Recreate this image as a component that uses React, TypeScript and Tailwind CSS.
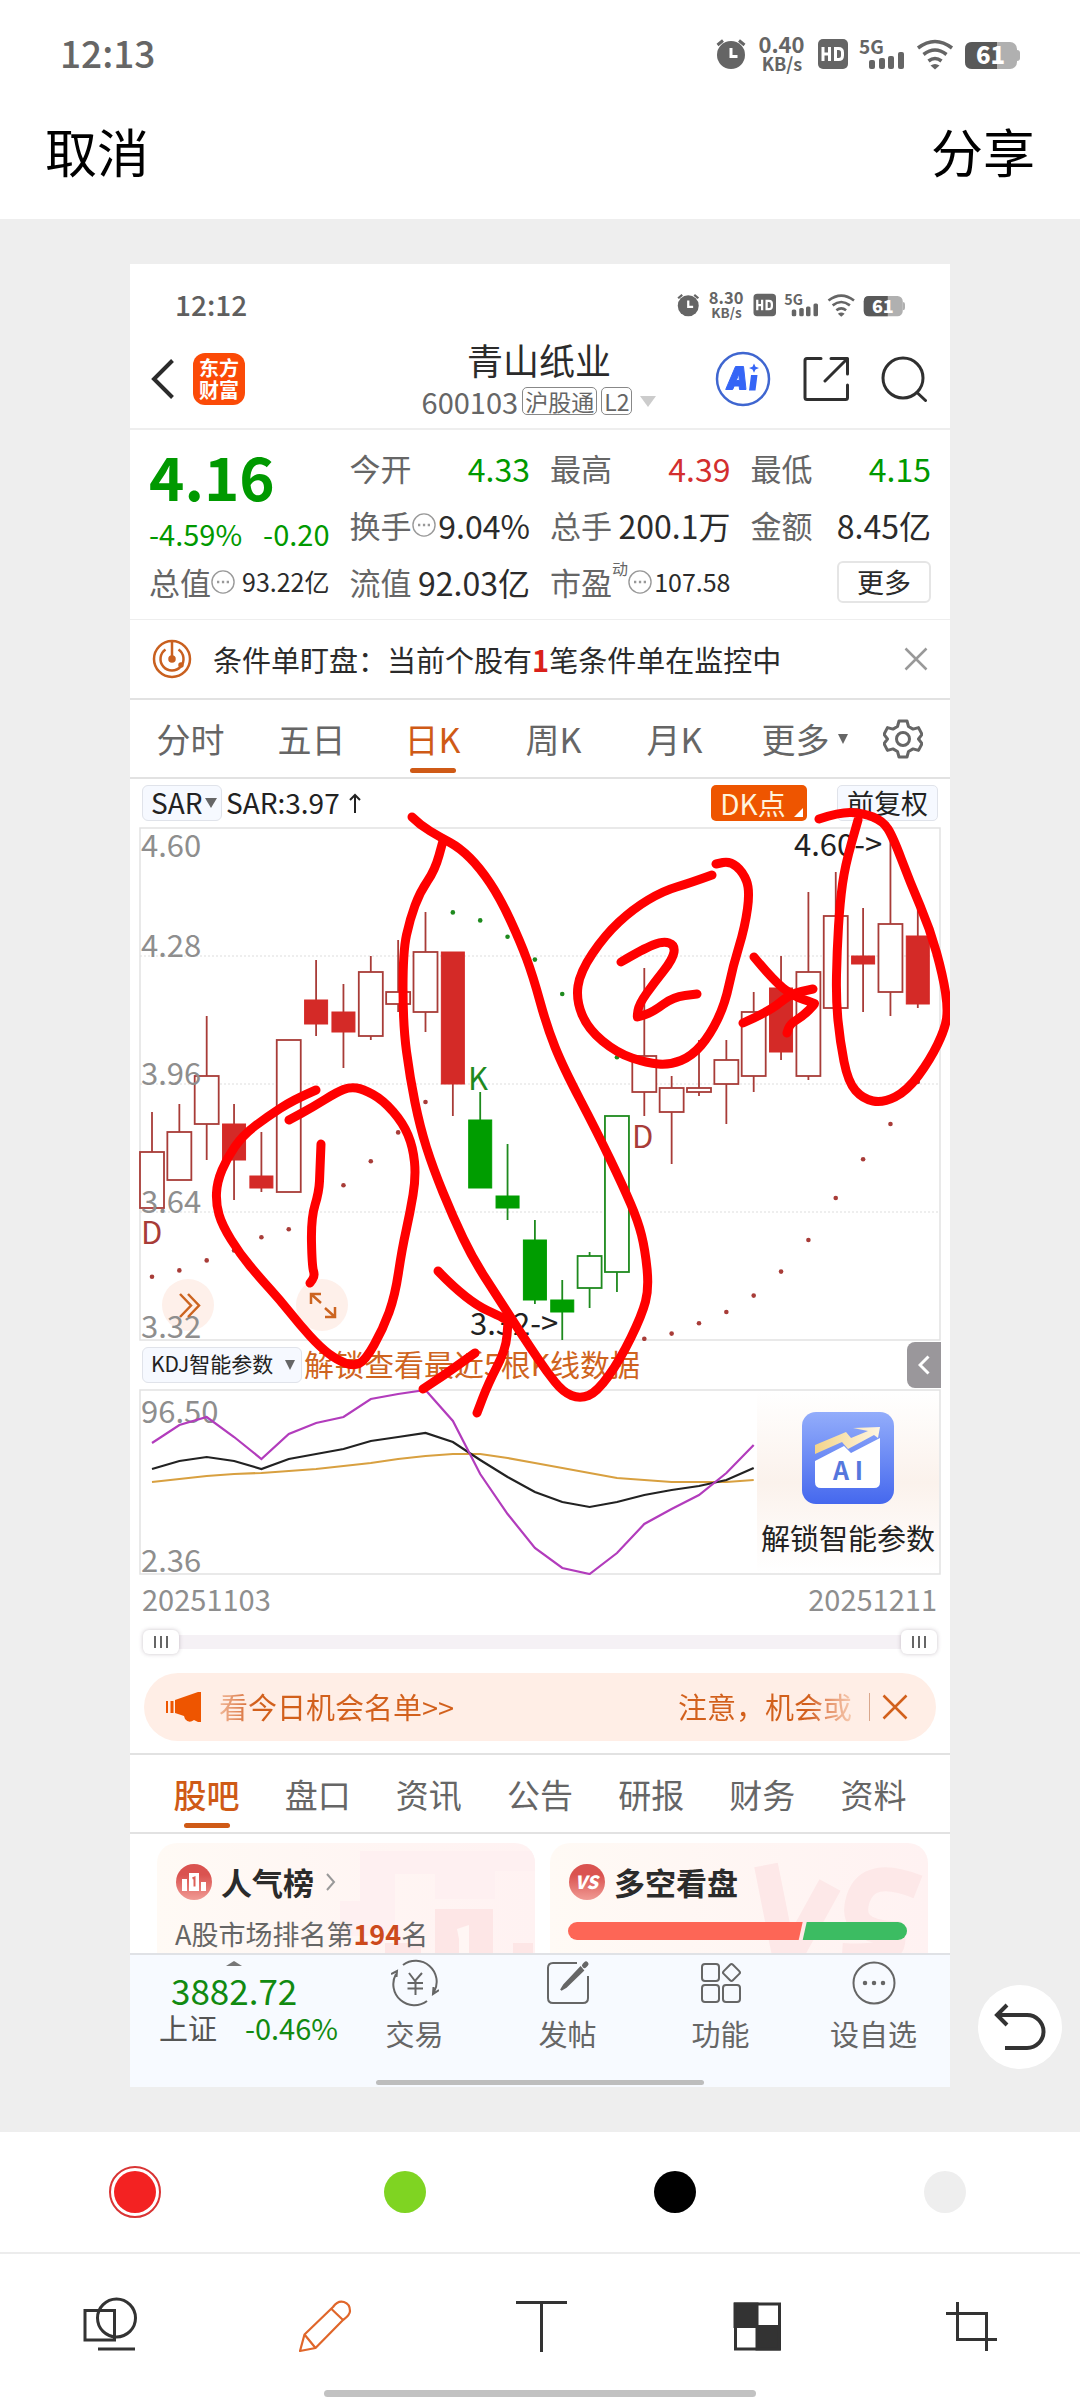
import type { ReactNode } from "react";
import * as Slider from "@radix-ui/react-slider";

const FONT = "font-['Noto_Sans_CJK_SC','Noto_Sans',sans-serif]";

type Point = [number, number];

type Candle = {
  high: number;
  top: number;
  bottom: number;
  low: number;
  color: "red" | "green";
  filled?: boolean;
};

const r = (high: number, top: number, bottom: number, low: number, filled = false): Candle => ({ high, top, bottom, low, color: "red", filled });
const g = (high: number, top: number, bottom: number, low: number, filled = false): Candle => ({ high, top, bottom, low, color: "green", filled });

const candles: Candle[] = [
  r(3.89, 3.79, 3.65, 3.65),
  r(3.91, 3.84, 3.72, 3.72),
  r(4.13, 3.98, 3.86, 3.77),
  r(3.91, 3.86, 3.77, 3.67, true),
  r(3.84, 3.73, 3.7, 3.69, true),
  r(4.07, 4.07, 3.69, 3.69),
  r(4.27, 4.17, 4.11, 4.08, true),
  r(4.21, 4.14, 4.09, 4.0, true),
  r(4.28, 4.24, 4.08, 4.07),
  r(4.32, 4.19, 4.16, 4.14),
  r(4.39, 4.29, 4.14, 4.09),
  r(4.29, 4.29, 3.96, 3.88, true),
  g(3.94, 3.87, 3.7, 3.7, true),
  g(3.81, 3.68, 3.65, 3.62, true),
  g(3.62, 3.57, 3.42, 3.41, true),
  g(3.47, 3.42, 3.39, 3.32, true),
  g(3.54, 3.53, 3.45, 3.4),
  g(3.88, 3.88, 3.49, 3.44),
  r(4.25, 4.03, 3.94, 3.88),
  r(3.98, 3.95, 3.89, 3.76),
  r(4.07, 3.95, 3.94, 3.93),
  r(4.07, 4.02, 3.96, 3.86),
  r(4.19, 4.14, 3.98, 3.94),
  r(4.28, 4.2, 4.04, 4.02, true),
  r(4.44, 4.24, 3.98, 3.97),
  r(4.49, 4.38, 4.15, 4.15),
  r(4.4, 4.28, 4.26, 4.14, true),
  r(4.6, 4.36, 4.19, 4.13),
  r(4.4, 4.33, 4.16, 4.15, true),
];

const sar = [
  3.478, 3.494, 3.519, 3.544, 3.577, 3.597, 3.651, 3.707, 3.767, 3.839, 3.915, 4.389, 4.369, 4.328, 4.271, 4.185, 4.105, 4.027,
  3.323, 3.336, 3.362, 3.39, 3.431, 3.491, 3.57, 3.675, 3.772, 3.86, 3.965,
];

// KDJ lines, y in chart pixels
const kLine = [80, 72, 68, 72, 80, 70, 65, 60, 52, 48, 44, 53, 71, 88, 103, 113, 118, 113, 106, 101, 97, 91, 79];
const dLine = [93, 90, 87, 85, 84, 82, 80, 77, 74, 70, 67, 65, 65, 69, 74, 79, 84, 89, 91, 93, 93, 93, 91];
const jLine = [54, 36, 28, 48, 70, 45, 34, 28, 10, 5, 1, 32, 85, 125, 159, 179, 185, 164, 135, 120, 106, 84, 56];

const step = 27.35;
const xAt = (i: number) => 13 + step * i;
const yAt = (price: number) => 1 + (4.6 - price) * 400;
const linePoints = (ys: number[]) => ys.map((y, i) => `${xAt(i).toFixed(1)},${y}`).join(" ");

// a doubled point makes a sharp corner
const strokes: Point[][] = [
  // circle around 1
  [[186, 826], [163, 836], [137, 853], [113, 871], [97, 894], [87, 918], [86, 940], [92, 961], [110, 990], [130, 1014], [150, 1036], [170, 1061], [190, 1083], [207, 1096], [223, 1102], [235, 1097], [253, 1065], [265, 1032], [272, 985], [280, 949], [286, 913], [283, 883], [273, 859], [253, 836], [233, 825], [220, 823], [207, 828], [183, 843], [159, 856]],
  [[191, 880], [190, 906], [189, 928], [181, 954], [182, 1002], [185, 1012], [180, 1019]],
  // long loop
  [[282, 553], [290, 561], [310, 573], [330, 584], [350, 604], [370, 634], [390, 677], [403, 712], [417, 763], [433, 803], [467, 868], [493, 922], [508, 957], [515, 985], [519, 1024], [512, 1051], [490, 1096], [467, 1128], [450, 1135], [433, 1128], [417, 1108], [400, 1083], [383, 1057], [367, 1032], [343, 995], [323, 953], [303, 904], [290, 863], [280, 814], [273, 761], [273, 687], [280, 655], [290, 628], [305, 606], [313, 577]],
  [[308, 1007], [337, 1037], [378, 1056], [378, 1058], [376, 1085], [358, 1120], [347, 1149]],
  [[345, 1089], [320, 1107], [293, 1125]],
  // circle around 2
  [[582, 611], [560, 619], [533, 627], [503, 645], [475, 671], [450, 708], [446, 736], [458, 765], [487, 789], [517, 799], [540, 801], [562, 792], [580, 771], [595, 740], [603, 702], [615, 663], [620, 626], [613, 608], [600, 597], [586, 600]],
  [[491, 698], [513, 685], [533, 677], [545, 681], [543, 695], [524, 719], [509, 740], [507, 753], [508, 753], [523, 748], [543, 733], [567, 730]],
  [[624, 693], [643, 716], [663, 732], [684, 739], [685, 740], [673, 752], [660, 760], [657, 769]],
  [[613, 759], [640, 747], [660, 730], [683, 725]],
  // loop on the right
  [[689, 555], [710, 548], [733, 549], [753, 557], [763, 573], [780, 618], [800, 665], [813, 712], [818, 745], [815, 765], [800, 796], [777, 827], [753, 839], [733, 835], [718, 818], [710, 777], [706, 736], [707, 687], [710, 638], [715, 602], [728, 556]],
];

// quadratic curve through the midpoints of a hand drawn stroke
function smooth(points: Point[]) {
  let d = `M${points[0][0]} ${points[0][1]}`;
  for (let i = 1; i < points.length - 1; i++) {
    const [x, y] = points[i];
    const [nx, ny] = points[i + 1];
    d += ` Q${x} ${y} ${(x + nx) / 2} ${(y + ny) / 2}`;
  }
  const last = points[points.length - 1];
  return `${d} L${last[0]} ${last[1]}`;
}

function StatusIcons({ speed, className }: { speed: string; className: string }) {
  return (
    <svg viewBox="0 0 304 40" className={className} fill="#656565" aria-hidden="true">
      <circle cx="15" cy="21" r="14" />
      <path d="M1.500 11L7 6.500M28.500 11L23 6.500" stroke="#656565" strokeWidth="3" />
      <path d="M15 14v8.500h6.500" stroke="#fff" strokeWidth="3" fill="none" />
      <text x="65.500" y="19" fontSize="22" fontWeight="700" textAnchor="middle">{speed}</text>
      <text x="66" y="37" fontSize="18" fontWeight="700" textAnchor="middle">KB/s</text>
      <rect x="102" y="5" width="30" height="30" rx="5" />
      <path d="M107 13v14M113.500 13v14M107 20h6.500M119.500 14.500v11h3q4 0 4-4v-3q0-4-4-4z" stroke="#fff" strokeWidth="3" fill="none" />
      <text x="155.500" y="20" fontSize="19" fontWeight="700" textAnchor="middle">5G</text>
      <rect x="153" y="26" width="6" height="9" rx="2" />
      <rect x="163" y="24" width="6" height="11" rx="2" />
      <rect x="172" y="22" width="6" height="13" rx="2" />
      <rect x="182" y="18" width="6" height="17" rx="2" />
      <g fill="none" stroke="#656565" strokeWidth="3.500">
        <path d="M202 14q17 -13 34 0" />
        <path d="M207.500 20.500q11.500 -9 23 0" />
        <path d="M212.500 27q6.500 -5 13 0" />
      </g>
      <path d="M214.500 31.500q4.500 -3 9 0L219 35.500z" />
      <rect x="249" y="8" width="52" height="27" rx="7" fill="#b0b0b0" />
      <path d="M301 16q3 0 3 3v5q0 3 -3 3z" fill="#b0b0b0" />
      <path d="M281 8h-25q-7 0 -7 7v13q0 7 7 7h25z" fill="#595959" />
      <text x="274.500" y="30" fontSize="24" fontWeight="900" fill="#fff" textAnchor="middle">61</text>
    </svg>
  );
}

function Dots() {
  return (
    <svg viewBox="0 0 26 26" className="size-6 shrink-0" fill="none" stroke="#999" strokeWidth="1.500" aria-hidden="true">
      <circle cx="13" cy="13" r="12" />
      <path d="M6.500 13h2.500M11.800 13h2.500M17 13h2.500" strokeWidth="2.500" />
    </svg>
  );
}

function Stat({ label, value, tone = "text-[#2b2b2b]", small = false, dots = false, sup }: { label: string; value: string; tone?: string; small?: boolean; dots?: boolean; sup?: string }) {
  return (
    <div className="flex items-center whitespace-nowrap">
      <span className="text-[31px] text-[#666]">{label}</span>
      {sup && <sup className="top-0 self-start pt-[5px] text-[16px] leading-5 text-[#666]">{sup}</sup>}
      {dots && <Dots />}
      <span className={`ml-auto ${small ? "text-[25px]" : "text-[32px]"} ${tone}`}>{value}</span>
    </div>
  );
}

function Header() {
  return (
    <header className="grid h-[92px] grid-cols-[1fr_auto_1fr] items-center border-b-2 border-[#eee] pr-[23px] pb-2 pl-[21px]">
      <div className="flex items-center gap-[18px]">
        <button type="button" aria-label="返回">
          <svg viewBox="0 0 24 42" className="h-[42px] w-6" fill="none" stroke="#2b2b2b" strokeWidth="4">
            <path d="M21.500 2.500L3 21l18.500 18.500" />
          </svg>
        </button>
        <div className="flex size-[52px] flex-col items-center justify-center rounded-[12px] bg-[#fb4a07] text-[20px] leading-[22px] font-bold text-white">
          <span>东方</span>
          <span>财富</span>
        </div>
      </div>
      <div className="flex flex-col items-center gap-2">
        <h1 className="text-[36px] leading-9 text-[#2b2b2b]">青山纸业</h1>
        <div className="flex items-center gap-1 text-[29px] leading-8 text-[#666]">
          <span>600103</span>
          <span className="rounded-[5px] border border-[#888] px-[2px] text-[23px] leading-[26px]">沪股通</span>
          <span className="rounded-[5px] border border-[#888] px-[2px] text-[23px] leading-[26px]">L2</span>
          <svg viewBox="0 0 16 11" className="ml-1 h-[11px] w-4" fill="#ccc" aria-hidden="true">
            <path d="M0 0h16L8 11z" />
          </svg>
        </div>
      </div>
      <div className="flex items-center justify-end gap-8">
        <button type="button" aria-label="AI">
          <svg viewBox="0 0 56 56" className="size-14" fill="none">
            <circle cx="28" cy="28" r="26" stroke="#3f66d0" strokeWidth="2.500" />
            <path fillRule="evenodd" d="M20.500 15.500h8l2.500 23h-6.500l-.3-3.500h-5l-1.500 3.500h-7zM23.800 23l-2.500 6.500h3z" fill="#3565f6" stroke="#3565f6" strokeLinejoin="round" />
            <path d="M36 24h6.500l-2 15.500h-6.500zM39 12.500l1.500 3.200 3.500 1.300-3.500 1.500-1.500 3.200-1.500-3.200-3.500-1.500 3.500-1.300z" fill="#3565f6" />
          </svg>
        </button>
        <button type="button" aria-label="分享行情">
          <svg viewBox="0 0 46 46" className="size-[46px]" fill="none" stroke="#2f2f2f" strokeWidth="3" strokeLinecap="round" strokeLinejoin="round">
            <path d="M18 2.500H4q-2 0-2 2v37q0 2 2 2h38.500q2 0 2-2V29M28 2.500h16.500V18M44 3L22 25" />
          </svg>
        </button>
        <button type="button" aria-label="搜索">
          <svg viewBox="0 0 46 46" className="size-[46px]" fill="none" stroke="#2f2f2f" strokeWidth="3" strokeLinecap="round">
            <circle cx="22" cy="22" r="20" />
            <path d="M36 36.500l8.500 8" />
          </svg>
        </button>
      </div>
    </header>
  );
}

function Quote() {
  return (
    <section className="grid grid-cols-4 grid-rows-[57px_57px_57px] gap-x-5 border-b border-[#eee] pt-[9px] pr-[19px] pb-[9px] pl-[19px] leading-none">
      <div className="row-span-2 text-[#009900]">
        <div className="text-[60px] leading-[72px] font-bold">4.16</div>
        <div className="flex justify-between pt-px text-[29px] leading-[42px]">
          <span>-4.59%</span>
          <span>-0.20</span>
        </div>
      </div>
      <Stat label="今开" value="4.33" tone="text-[#009900]" />
      <Stat label="最高" value="4.39" tone="text-[#d32f2f]" />
      <Stat label="最低" value="4.15" tone="text-[#009900]" />
      <Stat label="换手" value="9.04%" dots />
      <Stat label="总手" value="200.1万" />
      <Stat label="金额" value="8.45亿" />
      <Stat label="总值" value="93.22亿" small dots />
      <Stat label="流值" value="92.03亿" />
      <Stat label="市盈" value="107.58" small dots sup="动" />
      <div className="flex items-center justify-end">
        <button type="button" className="h-[42px] w-[94px] rounded-[6px] border-2 border-[#e5e5e5] text-[27px] leading-8 text-[#2b2b2b]">更多</button>
      </div>
    </section>
  );
}

function Notice() {
  return (
    <section className="flex h-20 items-center border-b-2 border-[#e2e2e2] pr-[22px] pl-[22px]">
      <svg viewBox="0 0 40 40" className="size-10" fill="none" stroke="#c9601f" strokeWidth="2.500" aria-hidden="true">
        <circle cx="20" cy="20" r="18" />
        <path d="M13.500 10.500a11.500 11.500 0 1 0 13 0M20 2v18" />
        <circle cx="20" cy="20" r="2.500" fill="#c9601f" />
        <circle cx="29" cy="26" r="1.500" fill="#c9601f" />
      </svg>
      <p className="ml-[21px] text-[29px] leading-10 whitespace-nowrap text-[#2b2b2b]">
        条件单盯盘：当前个股有<b className="text-[#d9201a]">1</b>笔条件单在监控中
      </p>
      <button type="button" aria-label="关闭" className="ml-auto">
        <svg viewBox="0 0 24 24" className="size-6" stroke="#999" strokeWidth="2.500">
          <path d="M1.500 1.500l21 21M22.500 1.500l-21 21" />
        </svg>
      </button>
    </section>
  );
}

function PeriodTabs() {
  const periods = ["分时", "五日", "日K", "周K", "月K"];
  return (
    <nav className="flex h-[79px] border-b-2 border-[#e2e2e2] text-[34px] leading-10">
      {periods.map((p) => (
        <button key={p} type="button" className={"relative flex-1 " + (p === "日K" ? "text-[#cf5a16]" : "text-[#666]")}>
          {p}
          {p === "日K" && <span className="absolute bottom-1 left-1/2 h-[5px] w-[46px] -translate-x-1/2 rounded-full bg-[#cf5a16]" />}
        </button>
      ))}
      <button type="button" className="flex-1 text-[#666]">
        <span className="flex items-center justify-center gap-2 pl-[18px]">
          更多
          <svg viewBox="0 0 10 10" className="size-[10px]" fill="#666" aria-hidden="true">
            <path d="M0 0h10L5 10z" />
          </svg>
        </span>
      </button>
      <button type="button" aria-label="设置" className="flex w-[94px] items-center justify-center">
        <svg viewBox="0 0 40 40" className="size-10" fill="none" stroke="#666" strokeWidth="3" strokeLinejoin="round">
          <path d="M16 2h8l1.500 5.500 4.500 2.600 5.500-1.500 3.500 6.700-3.500 4.700 3.500 4.700-3.500 6.700-5.500-1.500-4.500 2.600L24 38h-8l-1.500-5.500-4.500-2.600-5.500 1.500L1 24.700 4.500 20 1 15.300l3.500-6.700 5.500 1.500 4.500-2.600z" />
          <circle cx="20" cy="20" r="6.500" />
        </svg>
      </button>
    </nav>
  );
}

function Picker({ label, value, className, children }: { label: string; value: string; className: string; children?: ReactNode }) {
  return (
    <span className="relative inline-flex items-center">
      <select aria-label={label} defaultValue={value} className={`h-9 appearance-none rounded-[6px] border border-[#e0e3ea] bg-[#f6f9ff] pb-[2px] pl-2 text-[#222] ${className}`}>
        <option>{value}</option>
      </select>
      {children}
    </span>
  );
}

function IndicatorBar() {
  return (
    <div className="flex h-12 items-center pr-3 pb-px pl-3 text-[28px] leading-8 text-[#222]">
      <Picker label="主图指标" value="SAR" className="w-20">
        <svg viewBox="0 0 12 10" className="pointer-events-none absolute right-[5px] h-[10px] w-3" fill="#666" aria-hidden="true">
          <path d="M0 0h12L6 10z" />
        </svg>
      </Picker>
      <span className="ml-1 pb-px whitespace-nowrap">SAR:3.97</span>
      <svg viewBox="0 0 12 20" className="ml-[9px] h-5 w-3" fill="none" stroke="#222" strokeWidth="2" aria-hidden="true">
        <path d="M6 20V2M1 7l5-5 5 5" />
      </svg>
      <button type="button" className="relative ml-auto h-9 w-24 rounded-[5px] bg-[#ee5500] pr-3 text-[28px] leading-8 text-[#fff3dc]">
        DK点
        <svg viewBox="0 0 10 10" className="absolute right-1 bottom-1 size-[9px]" fill="#fff" aria-hidden="true">
          <path d="M10 0v10H0z" />
        </svg>
      </button>
      <button type="button" className="ml-[30px] h-9 w-[101px] rounded-[5px] border border-[#e0e3ea] bg-[#f6f9ff] text-[27px] leading-8">前复权</button>
    </div>
  );
}

function KLineChart() {
  return (
    <svg viewBox="0 0 802 514" className="block h-auto w-full" fontSize="31" role="img" aria-label="日K线">
      <rect x="1" y="1" width="800" height="512" fill="none" stroke="#e2e2e2" strokeWidth="1.500" />
      {[4.28, 3.96, 3.64].map((p) => (
        <line key={p} x1="1" x2="801" y1={yAt(p)} y2={yAt(p)} stroke="#ddd" strokeDasharray="2 2" />
      ))}
      <circle cx="49" cy="478" r="26" fill="#fef0ea" />
      <circle cx="183" cy="478" r="26" fill="#fef0ea" />
      {candles.map((c, i) => {
        const red = c.color === "red";
        const line = red ? "#a83c38" : "#1e8a1e";
        const fill = red ? "#d42a27" : "#009d00";
        const x = xAt(i);
        return (
          <g key={i} stroke={line} strokeWidth="1.800">
            <path d={`M${x} ${yAt(c.high)}V${yAt(c.top)}M${x} ${yAt(c.bottom)}V${yAt(c.low)}`} />
            {c.filled ? (
              <rect x={x - 11.5} y={yAt(c.top)} width="23" height={yAt(c.bottom) - yAt(c.top)} fill={fill} stroke={fill} strokeWidth="1" />
            ) : (
              <rect x={x - 12} y={yAt(c.top)} width="24" height={yAt(c.bottom) - yAt(c.top)} fill="#fff" />
            )}
          </g>
        );
      })}
      {sar.map((p, i) => (
        <circle key={i} cx={xAt(i)} cy={yAt(p)} r="2.300" fill={i > 10 && i < 18 ? "#1e8a1e" : "#a83c38"} />
      ))}
      <g fill="#8e8e8e">
        <text x="2" y="30">4.60</text>
        <text x="2" y="130">4.28</text>
        <text x="2" y="258">3.96</text>
        <text x="2" y="386">3.64</text>
        <text x="2" y="511">3.32</text>
      </g>
      <text x="2" y="417" fill="#a83c38">D</text>
      <text x="493" y="321" fill="#a83c38">D</text>
      <text x="329" y="263" fill="#1e8a1e">K</text>
      <text x="655" y="29" fill="#222">4.60-&gt;</text>
      <text x="331" y="508" fill="#222">3.32-&gt;</text>
      <g fill="none" stroke="#cc6420" strokeWidth="2.500">
        <path d="M41 467l11 11.500-11 11.500M49 467l11 11.500-11 11.500" />
        <path d="M172 477v-10h10M172 467l10 9M196 480v10h-10M196 490l-10-9" />
      </g>
    </svg>
  );
}

function KdjSection() {
  return (
    <>
      <div className="flex h-12 items-center pb-px pl-3">
        <Picker label="副图指标" value="KDJ智能参数" className="w-40 text-[21px]">
          <svg viewBox="0 0 10 10" className="pointer-events-none absolute right-[7px] size-[10px]" fill="#666" aria-hidden="true">
            <path d="M0 0h10L5 10z" />
          </svg>
        </Picker>
        <a href="#unlock" className="ml-[2px] pb-1 text-[30px] leading-8 whitespace-nowrap text-[#cf6420]">解锁查看最近5根K线数据</a>
        <button type="button" aria-label="展开" className="mr-[9px] ml-auto flex h-[46px] w-[34px] items-center justify-center rounded-l-[8px] bg-[#9a979b]">
          <svg viewBox="0 0 12 20" className="h-5 w-3" fill="none" stroke="#fff" strokeWidth="3">
            <path d="M10.500 1.500L2 10l8.500 8.500" />
          </svg>
        </button>
      </div>
      <div className="relative px-[9px]">
        <svg viewBox="0 0 802 186" className="block h-auto w-full" fontSize="31" role="img" aria-label="KDJ">
          <rect x="1" y="1" width="800" height="184" fill="none" stroke="#e2e2e2" strokeWidth="1.500" />
          <text x="2" y="34" fill="#8e8e8e">96.50</text>
          <text x="2" y="183" fill="#8e8e8e">2.36</text>
          <g fill="none" strokeWidth="2.200">
            <polyline points={linePoints(dLine)} stroke="#d8a040" />
            <polyline points={linePoints(kLine)} stroke="#222" />
            <polyline points={linePoints(jLine)} stroke="#b23cbc" />
          </g>
        </svg>
        <a href="#unlock" className="absolute inset-y-[2px] right-[11px] flex w-[182px] flex-col items-center bg-linear-to-b from-white via-[#fbf2ec] to-white pt-5">
          <svg viewBox="0 0 94 94" className="size-[94px]" aria-hidden="true">
            <defs>
              <linearGradient id="ai-bg" x1="0" y1="0" x2="0" y2="1">
                <stop offset="0" stopColor="#93adfb" />
                <stop offset="1" stopColor="#4568ee" />
              </linearGradient>
              <linearGradient id="ai-arrow" x1="0" y1="0" x2="1" y2="0">
                <stop offset="0" stopColor="#f3d48a" />
                <stop offset="1" stopColor="#fff6e2" />
              </linearGradient>
            </defs>
            <rect x="1" y="1" width="92" height="92" rx="14" fill="url(#ai-bg)" />
            <path d="M14 50l29-15 7 7 29-15v44q0 6-6 6H20q-6 0-6-6z" fill="#fff" />
            <path d="M14 34l31-13 5 6 17-7-15-3 27-1-2 11-4-3-26 14-6-7-27 12z" fill="url(#ai-arrow)" />
            <text x="47" y="69" fontSize="25" fontWeight="700" fill="#5577dd" textAnchor="middle">A I</text>
          </svg>
          <span className="mt-4 text-[29px] leading-8 whitespace-nowrap text-[#222]">解锁智能参数</span>
        </a>
      </div>
      <div className="flex h-[52px] items-center justify-between pr-[13px] pb-[6px] pl-3 text-[29px] leading-8 text-[#8e8e8e]">
        <span>20251103</span>
        <span>20251211</span>
      </div>
    </>
  );
}

function RangeSlider() {
  const thumb = "flex h-6 w-9 items-center justify-center gap-1 rounded-[6px] bg-white shadow-[0_0_4px_rgba(80,60,80,0.3)]";
  const grip = "h-3 w-[2px] bg-[#666]";
  return (
    <Slider.Root defaultValue={[0, 100]} className="relative mx-[13px] flex h-[30px] items-center">
      <Slider.Track className="relative h-[14px] grow rounded-full bg-[#f5f1f5]">
        <Slider.Range className="absolute h-full" />
      </Slider.Track>
      {["开始日期", "结束日期"].map((name) => (
        <Slider.Thumb key={name} aria-label={name} className={thumb}>
          <i className={grip} />
          <i className={grip} />
          <i className={grip} />
        </Slider.Thumb>
      ))}
    </Slider.Root>
  );
}

function Banner() {
  return (
    <div className="mx-[14px] mt-4 mb-3 flex h-[68px] items-center rounded-full bg-[#ffeee6] pr-7 pl-[22px] text-[29px] leading-10 text-[#d2601c]">
      <svg viewBox="0 0 36 30" className="h-[30px] w-9" fill="#ee5500" aria-hidden="true">
        <path d="M0 9h2v12H0zM4.500 9h3v12h-3zM9 8L32 0h3v30h-3l-4-2q-5 4-9-1l-1-3-9-3z" />
      </svg>
      <span className="ml-[17px] bg-linear-to-r from-[#f0b797] to-[#d2601c] to-15% bg-clip-text pb-[2px] whitespace-nowrap text-transparent">看今日机会名单&gt;&gt;</span>
      <span className="ml-auto bg-linear-to-r from-[#d2601c] from-75% to-[#f6cbb2] bg-clip-text pb-[2px] whitespace-nowrap text-transparent">注意，机会或</span>
      <span className="ml-[17px] h-7 w-px bg-[#d9a78c]" />
      <button type="button" aria-label="关闭公告" className="ml-3">
        <svg viewBox="0 0 26 26" className="size-[26px]" stroke="#d2601c" strokeWidth="2.500">
          <path d="M1.500 1.500l23 23M24.500 1.500l-23 23" />
        </svg>
      </button>
    </div>
  );
}

function ContentTabs() {
  const tabs = ["股吧", "盘口", "资讯", "公告", "研报", "财务", "资料"];
  return (
    <nav className="flex h-[81px] border-y-2 border-[#e2e2e2] px-[21px] text-[33px] leading-10">
      {tabs.map((t) => (
        <button key={t} type="button" className={"relative flex-1 " + (t === "股吧" ? "font-medium text-[#cf5a16]" : "text-[#666]")}>
          {t}
          {t === "股吧" && <span className="absolute bottom-1 left-1/2 h-[5px] w-[46px] -translate-x-1/2 rounded-full bg-[#cf5a16]" />}
        </button>
      ))}
    </nav>
  );
}

function Cards() {
  const card = "relative h-[130px] overflow-hidden rounded-[20px] bg-linear-to-r from-[#fffaf5] to-[#fff2f2] pt-5";
  return (
    <section className="grid h-[119px] grid-cols-2 gap-[15px] overflow-hidden pt-[9px] pr-[22px] pl-[27px]">
      <div className={`${card} pl-[18px]`}>
        <svg viewBox="0 0 200 110" className="absolute top-2 right-0 h-[110px] w-[200px]" aria-hidden="true">
          <path d="M25 -10h175v30h-40v28h-60v-25H60v62H5V50h20z" fill="#fef0f1" />
          <path d="M100 58h58v60h-58zM50 92h36v28H50zM178 92h20v28h-20z" fill="#fde6e6" />
          <path d="M122 78l12-4v46h-10V88z" fill="#fff6f4" />
        </svg>
        <div className="relative flex items-center">
          <svg viewBox="0 0 38 38" className="size-[38px]" aria-hidden="true">
            <defs>
              <linearGradient id="badge" x1="0" y1="0" x2="0" y2="1">
                <stop offset="0.300" stopColor="#da5350" />
                <stop offset="1" stopColor="#f09a94" />
              </linearGradient>
            </defs>
            <circle cx="19" cy="19" r="18" fill="url(#badge)" />
            <path d="M7 16h5v12H7zM14 10h10v18H14zM26 19h5v9h-5z" fill="#fff" />
            <path d="M17.500 15.500l2-1v9" fill="none" stroke="#dd6059" strokeWidth="2" />
          </svg>
          <h2 className="ml-2 text-[31px] leading-9 font-bold text-[#2b2b2b]">人气榜</h2>
          <svg viewBox="0 0 10 18" className="ml-3 h-[18px] w-[10px]" fill="none" stroke="#999" strokeWidth="2" aria-hidden="true">
            <path d="M1 1l7 8-7 8" />
          </svg>
        </div>
        <p className="relative mt-[17px] text-[27px] leading-8 whitespace-nowrap text-[#666]">
          A股市场排名第<b className="text-[#cc4a1c]">194</b>名
        </p>
      </div>
      <div className={`${card} pr-[21px] pl-[18px]`}>
        <svg viewBox="0 0 190 110" className="absolute top-3 right-0 h-[110px] w-[190px]" fill="none" stroke="#fde8e8" strokeWidth="24" aria-hidden="true">
          <path d="M28 10l20 100L92 30M180 32q-50-20-60 12t34 34q10 26-50 22" />
        </svg>
        <div className="relative flex items-center">
          <svg viewBox="0 0 38 38" className="size-[38px]" aria-hidden="true">
            <circle cx="19" cy="19" r="18" fill="url(#badge)" />
            <text x="18.500" y="26" fontSize="18" fontWeight="900" fontStyle="italic" fill="#fff" textAnchor="middle">VS</text>
          </svg>
          <h2 className="ml-2 text-[31px] leading-9 font-bold text-[#2b2b2b]">多空看盘</h2>
        </div>
        <svg viewBox="0 0 338 18" className="relative mt-[21px] block h-[18px] w-full" preserveAspectRatio="none" aria-hidden="true">
          <path d="M9 0h225l-4 18H9A9 9 0 0 1 9 0z" fill="#fd6656" />
          <path d="M238 0h91a9 9 0 0 1 0 18h-95z" fill="#3cbc62" />
        </svg>
      </div>
    </section>
  );
}

const appActions = [
  {
    label: "交易",
    icon: (
      <>
        <path d="M12 6a21 21 0 0 1 31 27M36 42A21 21 0 0 1 5 15M0 15l6-3-.500 6M48 31l-6 4 .500-7" />
        <path d="M18 14l6 8 7-8M24.500 22v14M16.500 24h15.500M16.500 29.500h15.500" />
      </>
    ),
  },
  {
    label: "发帖",
    icon: (
      <>
        <path d="M33 4H9q-5 0-5 5v30q0 5 5 5h30q5 0 5-5V17" />
        <path d="M36.500 8.500l2.500 3L22 28l-5 3 3-5z" fill="#666" />
        <path d="M40.500 6.500l1.500-1.500" strokeWidth="5" strokeLinecap="round" />
      </>
    ),
  },
  {
    label: "功能",
    icon: (
      <>
        <rect x="5" y="5" width="17" height="17" rx="3" />
        <rect x="5" y="26" width="17" height="17" rx="3" />
        <rect x="26" y="26" width="17" height="17" rx="3" />
        <rect x="28" y="7" width="13" height="13" rx="2" transform="rotate(45 34.500 13.500)" />
      </>
    ),
  },
  {
    label: "设自选",
    icon: (
      <>
        <circle cx="24" cy="24" r="20.500" />
        <path d="M15 24h.01M24 24h.01M33 24h.01" strokeWidth="4.500" strokeLinecap="round" />
      </>
    ),
  },
];

function AppBar() {
  return (
    <footer className="flex h-[134px] flex-col border-t-2 border-[#e0e2e6] bg-[#f7faff]">
      <div className="flex grow">
        <div className="w-[208px] pt-[6px] pl-[29px] leading-none whitespace-nowrap text-[#118a11]">
          <svg viewBox="0 0 16 5" className="ml-[67px] h-[5px] w-4" fill="#777" aria-hidden="true">
            <path d="M8 0l8 5H0z" />
          </svg>
          <div className="mt-[6px] pl-3 text-[35px] leading-9">3882.72</div>
          <div className="mt-px flex justify-between text-[29px] leading-9">
            <span className="text-[#555]">上证</span>
            <span>-0.46%</span>
          </div>
        </div>
        {appActions.map((a) => (
          <button key={a.label} type="button" className="flex flex-1 flex-col items-center gap-2 pt-1 text-[29px] leading-9 text-[#666]">
            <svg viewBox="0 0 48 48" className="size-12" fill="none" stroke="#666" strokeWidth="2" aria-hidden="true">
              {a.icon}
            </svg>
            {a.label}
          </button>
        ))}
      </div>
      <div className="mx-auto mb-[2px] h-[5px] w-2/5 rounded-full bg-[#bdbdbd]" />
    </footer>
  );
}

function SharedShot() {
  return (
    <article className="relative overflow-hidden bg-white">
      <div className="flex h-[74px] items-center justify-between px-[45px] pt-2 text-[28px] leading-8 font-medium text-[#5f5f5f]">
        <span className="pb-[2px]">12:12</span>
        <StatusIcons speed="8.30" className="h-[30px] w-[228px]" />
      </div>
      <Header />
      <Quote />
      <Notice />
      <PeriodTabs />
      <IndicatorBar />
      <div className="px-[9px]">
        <KLineChart />
      </div>
      <KdjSection />
      <RangeSlider />
      <Banner />
      <ContentTabs />
      <Cards />
      <AppBar />
      <svg viewBox="0 0 820 1822" className="pointer-events-none absolute top-0 left-0 h-auto w-full" fill="none" stroke="#ff0000" strokeWidth="9" strokeLinecap="round" strokeLinejoin="round" aria-hidden="true">
        {strokes.map((s, i) => (
          <path key={i} d={smooth(s)} />
        ))}
      </svg>
    </article>
  );
}

const colors = [
  { name: "红色", dot: "bg-[#f32222]" },
  { name: "绿色", dot: "bg-[#7fd422]" },
  { name: "黑色", dot: "bg-black" },
  { name: "灰色", dot: "bg-[#eeeeee]" },
];

const tools = [
  {
    name: "形状",
    icon: (
      <>
        <path d="M3 26.500h29.500v29.500H3zM16 65h37" />
        <circle cx="34.500" cy="34" r="19" />
      </>
    ),
  },
  {
    name: "画笔",
    icon: <path d="M3 67l4.500-16.500L36 23q5-7 11-5t6 9q0 4-7 9L18.500 64zM7.500 50.500l11 13.500M34 24.500l12 11.500" stroke="#e0662a" strokeWidth="2.200" strokeLinejoin="round" />,
  },
  { name: "文字", icon: <path d="M3 18.500h51M28.500 18.500v49.500" /> },
  {
    name: "马赛克",
    icon: (
      <>
        <rect x="6.500" y="20" width="44" height="45" />
        <path d="M6 20h22v22.500H6zM28 42.500h22V65H28z" fill="#333" />
      </>
    ),
  },
  { name: "裁剪", icon: <path d="M13.500 18v37.500H53M2 29.500h40.500V67" /> },
];

function Toolbar() {
  return (
    <footer>
      <div className="flex h-[122px] border-b-2 border-[#ececec]">
        {colors.map((c, i) => (
          <label key={c.name} className="flex flex-1 cursor-pointer items-center justify-center">
            <input type="radio" name="color" aria-label={c.name} defaultChecked={i === 0} className="peer sr-only" />
            <span className="rounded-full border-2 border-transparent p-[3px] peer-checked:border-[#d93434]">
              <span className={`block size-[42px] rounded-full ${c.dot}`} />
            </span>
          </label>
        ))}
      </div>
      <div className="flex h-[136px] pb-[6px] pl-[2px]">
        {tools.map((t) => (
          <button key={t.name} type="button" aria-label={t.name} className="flex flex-1 items-center justify-center">
            <svg viewBox="0 0 56 70" className="h-[70px] w-14" fill="none" stroke="#333" strokeWidth="3">
              {t.icon}
            </svg>
          </button>
        ))}
      </div>
      <div className="mx-auto h-[7px] w-2/5 rounded-full bg-[#c2c2c2]" />
    </footer>
  );
}

export default function App() {
  return (
    <div className={`min-h-screen bg-white ${FONT}`}>
      <header className="h-[219px]">
        <div className="flex h-[108px] items-center justify-between px-[60px] text-[37px] leading-10 font-medium text-[#666]">
          <span className="pb-1">12:13</span>
          <StatusIcons speed="0.40" className="h-10 w-[304px]" />
        </div>
        <div className="flex h-[86px] items-center justify-between px-[45px] text-[52px] leading-none text-black">
          <button type="button">取消</button>
          <button type="button">分享</button>
        </div>
      </header>
      <main className="relative bg-[#eeeeee] px-[130px] py-[45px]">
        <SharedShot />
        <button type="button" aria-label="撤销" className="absolute right-[18px] bottom-[63px] flex size-[84px] items-center justify-center rounded-full bg-white">
          <svg viewBox="0 0 54 50" className="h-[50px] w-[54px]" fill="none" stroke="#333" strokeWidth="4">
            <path d="M14 3L4 13l10 10M4 13h30a16 16 0 0 1 0 33H12" />
          </svg>
        </button>
      </main>
      <Toolbar />
    </div>
  );
}
